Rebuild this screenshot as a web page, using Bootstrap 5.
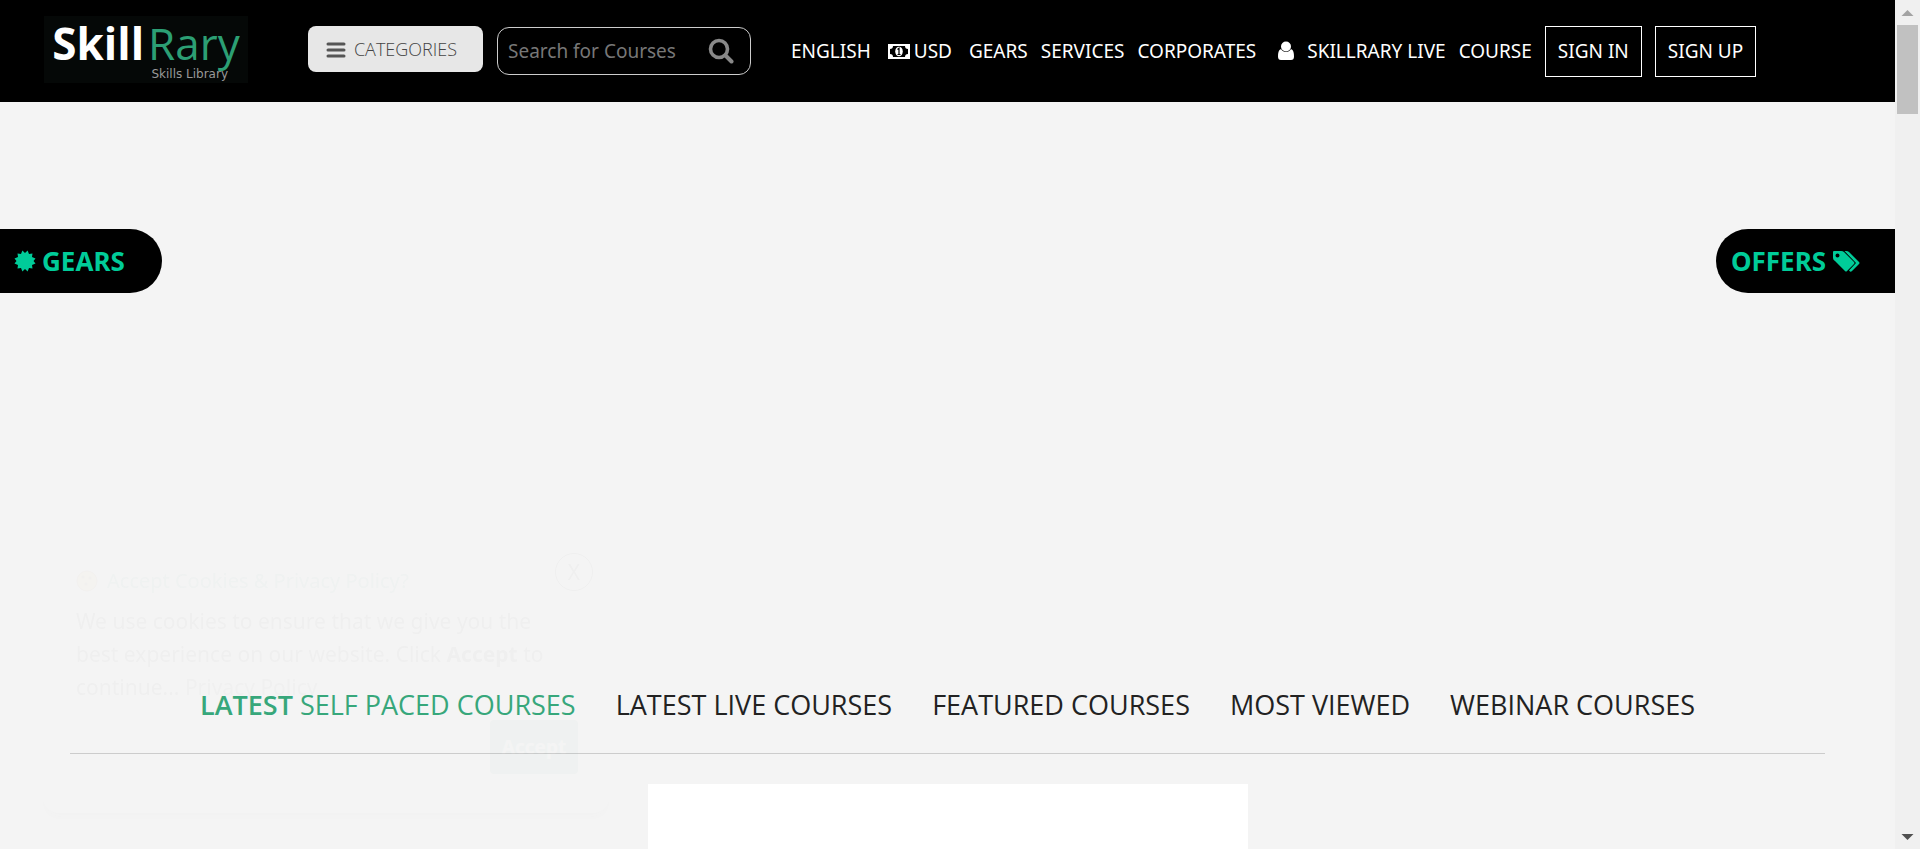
<!DOCTYPE html>
<html lang="en">
<head>
<meta charset="utf-8">
<meta name="viewport" content="width=device-width, initial-scale=1">
<title>SkillRary - Skills Library</title>
<link href="https://cdn.jsdelivr.net/npm/bootstrap@5.3.0/dist/css/bootstrap.min.css" rel="stylesheet">
<style>
body{background:#f4f4f4;font-family:"Noto Sans",sans-serif;font-size:19px;overflow:hidden}
.site-header{background:#000;min-height:102px;padding-left:44px}
.brand{width:204px;height:67px;background:#050807;line-height:1;text-decoration:none;font-family:"Open Sans",sans-serif}
.brand-name{font-size:44px;line-height:54px;color:#fff;font-weight:700}
.brand-name span{color:#2c9f74;font-weight:400;margin-left:4px}
.brand-sub{font:12px/8px "DejaVu Sans",sans-serif;color:#999;margin:0 20px 0 0}
.categories{width:175px;height:46px;background:#e7e7e7;color:#444;border-radius:8px;font:300 18px "Open Sans",sans-serif;margin-left:60px}
.search{width:254px;height:48px;border:1px solid #ccc;border-radius:12px;margin-left:14px}
.search input{background:transparent;color:#fff;font-size:19px;padding:0 0 0 10px}
.search input::placeholder{color:#777}
.main-links{margin-left:40px;gap:13px;white-space:nowrap}
.main-links a{color:#fff;text-decoration:none}
.main-links .sign{border:1px solid #fff;border-radius:0;height:51px;padding:0 12px}
.side-tag{background:#000;color:#0c9;height:64px;font-size:26px;font-weight:700;text-decoration:none;gap:6px}
.tag-left{width:162px;padding-left:14px;border-radius:0 32px 32px 0}
.tag-right{width:179px;padding-left:15px;border-radius:32px 0 0 32px}
.hero{padding-top:127px;min-height:583px}
.courses{margin:0 70px}
.course-tabs{font:400 27px/40px "Open Sans",sans-serif;gap:40px;height:69px;border-bottom:1px solid #ccc}
.course-tabs b{font-weight:600}
.course-tabs a{color:#222;text-decoration:none}
.course-tabs a.active{color:#37a77b}
.course-panel{width:600px;height:65px;background:#fff;margin:30px auto 0}
.scroll-rail{width:25px;background:#f0f0f0}
.scroll-thumb{width:21px;height:89px;background:#c1c1c1}
.cookie{left:43px;top:533px;width:566px;height:280px;padding:28px 33px;border-radius:16px;opacity:.02;font-size:21px;line-height:33px;color:#222;box-shadow:0 6px 10px -4px #777}
.cookie h2{font-size:20px;line-height:40px;color:#087;gap:9px;margin-bottom:4px}
.cookie p{width:490px}
.cookie a{color:#555;text-decoration:none}
.cookie .closer{right:16px;top:20px;width:38px;height:38px;border:1px solid #000;background:none;border-radius:50%}
.cookie .accept{right:31px;top:187px;width:88px;height:54px;border:0;border-radius:4px;background:#087f5b;color:#fff;font-size:19px;font-weight:700}
</style>
<script src="https://cdn.jsdelivr.net/npm/bootstrap@5.3.0/dist/js/bootstrap.bundle.min.js"></script>
</head>
<body>
<div class="d-flex min-vh-100 position-relative">
 <div class="flex-grow-1">
  <header class="site-header d-flex align-items-center">
   <a class="brand mb-1 d-flex flex-column align-items-center flex-shrink-0" href="#"><div class="brand-name">Skill<span>Rary</span></div><div class="brand-sub align-self-end">Skills Library</div></a>
   <button class="categories btn p-0 pe-2 mb-1 border-0 d-flex align-items-center justify-content-center gap-2 flex-shrink-0" type="button">
    <svg width="20" height="18" viewBox="0 0 20 18" stroke="#555" stroke-width="3" stroke-linecap="round"><path d="M2 4h16M2 10h16M2 16h16"/></svg>CATEGORIES</button>
   <form class="search d-flex align-items-center flex-shrink-0" role="search">
    <input class="form-control border-0 shadow-none" type="text" placeholder="Search for Courses" aria-label="Search for Courses">
    <button class="btn p-0 border-0 me-3 d-flex" type="button" aria-label="Search"><svg width="26" height="26" viewBox="0 0 26 26" fill="none" stroke="#888"><circle cx="11" cy="11" r="8.5" stroke-width="3.6"/><path d="m17.5 17.5 6 6" stroke-width="4" stroke-linecap="round"/></svg></button>
   </form>
   <nav class="main-links d-flex align-items-center">
    <a href="#">ENGLISH</a>
    <a href="#" class="d-flex align-items-center gap-1 mx-1"><svg width="22" height="15" viewBox="0 0 22 15"><path fill="#fff" fill-rule="evenodd" d="M0 0h22v15H0zM5 2A3 3 0 0 1 2 5v5a3 3 0 0 1 3 3h12a3 3 0 0 1 3-3V5a3 3 0 0 1-3-3z"/><ellipse cx="11" cy="7.500" rx="3.800" ry="4.800" fill="#fff"/><path d="M9.500 5.500 11 4.300v6M9.500 10.500h3" stroke="#000" stroke-width="1.200" fill="none"/></svg>USD</a>
    <a href="#">GEARS</a><a href="#">SERVICES</a><a href="#">CORPORATES</a>
    <a href="#" class="d-flex align-items-center ms-2 gap-2"><svg class="me-1" width="18" height="20" viewBox="0 0 18 20" fill="#fff"><circle cx="9" cy="5.500" r="5"/><path d="M4 8C1.500 9 1 12 1 15.500 1 18 2 19 4 19h10c2 0 3-1 3-3.500C17 12 16.500 9 14 8c-2 4-8 4-10 0z"/></svg>SKILLRARY LIVE</a>
    <a href="#">COURSE</a>
    <a class="sign d-flex align-items-center" href="#">SIGN IN</a>
    <a class="sign d-flex align-items-center" href="#">SIGN UP</a>
   </nav>
  </header>
  <section class="hero d-flex justify-content-between align-items-start">
   <a href="#" class="side-tag tag-left d-flex align-items-center"><svg width="22" height="22" viewBox="-11 -11 22 22" fill="#0c9"><path d="M0-8 2.600-10.500 4-7 7.500-7.500 7-4 10.500-2.600 8.500 0 10.500 2.600 7 4 7.500 7.500 4 7 2.600 10.500 0 8-2.600 10.500-4 7-7.500 7.500-7 4-10.500 2.600-8.500 0-10.500-2.600-7-4-7.500-7.500-4-7-2.600-10.500z"/></svg>GEARS</a>
   <a href="#" class="side-tag tag-right d-flex align-items-center">OFFERS<svg width="28" height="22" viewBox="0 0 28 22" fill="#0c9"><path fill-rule="evenodd" d="M1 2Q1 1 2 1h7q2 0 3 1l10 10q1 1 0 2l-7 7q-1 1-2 0L3 11q-2-1-2-3zM5.500 3.500a2 2 0 1 0 0 4 2 2 0 0 0 0-4z"/><path d="M12.500 1H14q2 0 3 1l10 10q1 1 0 2l-7 7q-1 1-2 .5l-1-1 7-7.500z"/></svg></a>
  </section>
  <section class="courses">
   <nav class="course-tabs d-flex justify-content-center text-nowrap">
    <a href="#" class="active"><b>LATEST</b> SELF PACED COURSES</a><a href="#">LATEST LIVE COURSES</a><a href="#">FEATURED COURSES</a><a href="#">MOST VIEWED</a><a href="#">WEBINAR COURSES</a>
   </nav>
   <div class="course-panel"></div>
  </section>
 </div>
 <aside class="scroll-rail d-flex flex-column align-items-center flex-shrink-0" aria-hidden="true">
  <svg width="25" height="25" fill="#a3a3a3"><path d="m12.500 10 6 6h-12z"/></svg>
  <div class="scroll-thumb"></div>
  <svg class="mt-auto" width="25" height="25" fill="#505050"><path d="M6.500 10h12l-6 6z"/></svg>
 </aside>
 <div class="cookie position-absolute" role="dialog" aria-label="Cookies">
  <h2 class="d-flex align-items-center fw-normal"><svg width="22" height="22" viewBox="0 0 22 22"><circle cx="11" cy="11" r="10" fill="#edae30" stroke="#975b16"/><g fill="#7b4a12"><circle cx="7" cy="7" r="1.500"/><circle cx="14" cy="8" r="1.500"/><circle cx="10" cy="14" r="1.500"/></g></svg>Accept Cookies &amp; Privacy Policy?</h2>
  <p class="mb-0">We use cookies to ensure that we give you the best experience on our website. Click <b>Accept</b> to continue... <a href="#">Privacy Policy</a></p>
  <button type="button" class="closer position-absolute p-0">X</button>
  <button type="button" class="accept position-absolute p-0">Accept</button>
 </div>
</div>
</body>
</html>
